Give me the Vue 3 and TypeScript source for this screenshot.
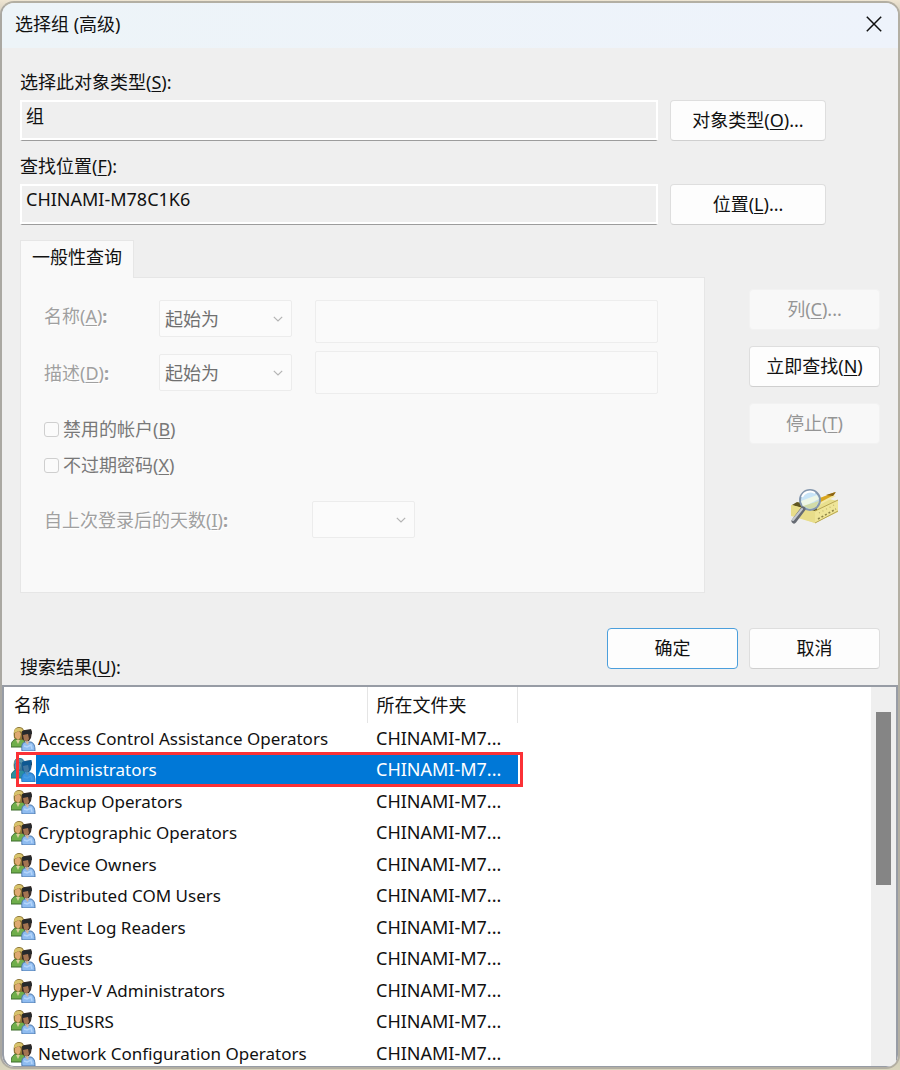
<script setup lang="ts">
import { ref } from 'vue'

const groups: string[] = [
  'Access Control Assistance Operators',
  'Administrators',
  'Backup Operators',
  'Cryptographic Operators',
  'Device Owners',
  'Distributed COM Users',
  'Event Log Readers',
  'Guests',
  'Hyper-V Administrators',
  'IIS_IUSRS',
  'Network Configuration Operators',
]
const folder = 'CHINAMI-M7...'
const selected = ref('Administrators')
const objectType = ref('组')
const place = ref('CHINAMI-M78C1K6')
const filters = [
  { id: 'name', text: '名称', key: 'A' },
  { id: 'desc', text: '描述', key: 'D' },
]
const checks = [
  { text: '禁用的帐户', key: 'B' },
  { text: '不过期密码', key: 'X' },
]
</script>

<template>
  <div class="desktop">
    <main class="dialog">
      <header class="titlebar">
        <h1>选择组 (高级)</h1>
        <button class="close" aria-label="关闭">
          <svg width="16" height="16" viewBox="0 0 16 16"><path d="M.8.8 15.2 15.2M15.2.8.8 15.2" fill="none" stroke="#111" stroke-width="1.5" /></svg>
        </button>
      </header>

      <form class="body" @submit.prevent>
        <section class="scope">
          <label for="type">选择此对象类型(<u>S</u>):</label>
          <input id="type" v-model="objectType" readonly />
          <button type="button" class="btn">对象类型(<u>O</u>)...</button>
          <label for="place">查找位置(<u>F</u>):</label>
          <input id="place" v-model="place" readonly />
          <button type="button" class="btn">位置(<u>L</u>)...</button>
        </section>

        <section class="middle">
          <div class="query">
            <button type="button" class="tab" role="tab" aria-selected="true">一般性查询</button>
            <div class="panel">
              <div v-for="f in filters" :key="f.id" class="filter">
                <label class="dim" :for="f.id">{{ f.text }}(<u>{{ f.key }}</u>)<b>:</b></label>
                <span class="combo">
                  <select disabled :aria-label="f.text"><option>起始为</option></select>
                  <svg width="10" height="6" viewBox="0 0 10 6"><path d="M.8.8 5 5 9.2.8" fill="none" stroke="#b4b4b4" stroke-width="1.2" /></svg>
                </span>
                <input :id="f.id" class="blank" disabled />
              </div>
              <div class="checks">
                <label v-for="c in checks" :key="c.key"><input type="checkbox" disabled /><span>{{ c.text }}(<u>{{ c.key }}</u>)</span></label>
              </div>
              <div class="days">
                <label class="dim" for="days">自上次登录后的天数(<u>I</u>)<b>:</b></label>
                <span class="combo">
                  <select id="days" disabled></select>
                  <svg width="10" height="6" viewBox="0 0 10 6"><path d="M.8.8 5 5 9.2.8" fill="none" stroke="#b4b4b4" stroke-width="1.2" /></svg>
                </span>
              </div>
            </div>
          </div>
          <div class="side">
            <button type="button" class="btn" disabled>列(<u>C</u>)...</button>
            <button type="button" class="btn">立即查找(<u>N</u>)</button>
            <button type="button" class="btn" disabled>停止(<u>T</u>)</button>
            <svg class="finder" width="50" height="40" viewBox="0 0 50 40">
              <path d="M2 18 25 9 48 14 48 25 25 36 1 29Z" fill="#e9df8d" />
              <path d="M2 18 7 15 27 20 27 25Z" fill="#5f5521" />
              <path d="M13 16 39 8 46 9 26 20Z" fill="#f3e9a8" />
              <path d="M25 13 45 5 44 8 25 18Z" fill="#d9a520" />
              <path d="M36 8 46 5 43 9Z" fill="#8a6412" />
              <path d="M1 18 25 24 25 36 1 28Z" fill="#e8dd8a" />
              <path d="M25 24 48 13 48 24 25 36Z" fill="#efe597" />
              <path d="M25 24 48 13M25 36 48 24" stroke="#b7a552" fill="none" />
              <path d="M28 32 46 22" stroke="#8d8448" stroke-width="1.6" stroke-dasharray="2 2" />
              <path d="M29 26 46 17" stroke="#c3b66e" stroke-width="1.2" stroke-dasharray="1 3" />
              <circle cx="20" cy="13" r="10" fill="#c5e3f7" fill-opacity=".93" stroke="#8396ad" stroke-width="2" />
              <path d="M11 14 27 8 29 12 13 20Z" fill="#f5f9e4" fill-opacity=".85" />
              <path d="M13 19 29 14 26 20 20 22Z" fill="#d5d996" fill-opacity=".8" />
              <path d="M12 10C14 5 20 3 25 6" fill="none" stroke="#fff" stroke-width="2" />
              <path d="M13 22 4 34" stroke="#666b73" stroke-width="5" stroke-linecap="round" />
              <path d="M12 22 3 33" stroke="#c5c9cf" stroke-width="2" stroke-linecap="round" />
            </svg>
          </div>
        </section>

        <section class="actions">
          <span id="results">搜索结果(<u>U</u>):</span>
          <button type="submit" class="btn primary">确定</button>
          <button type="button" class="btn">取消</button>
        </section>
      </form>

      <section class="results">
        <div class="listing">
          <table id="groups" aria-labelledby="results">
            <thead>
              <tr><th class="name">名称</th><th class="folder">所在文件夹</th></tr>
            </thead>
            <tbody>
              <tr v-for="g in groups" :key="g" :class="{ selected: g === selected }" @click="selected = g">
                <td class="name">
                  <div class="entry">
                    <svg class="people" width="25" height="24" viewBox="0 0 25 24">
                      <path d="M0 20C0 15 2 13 5 12L12 12 16 18 13 20Z" fill="#6fae4b" stroke="#3c6d2c" />
                      <path d="M3 11C2 5 3 0 8 0S14 4 13 12L10 13 4 12Z" fill="#8b7431" />
                      <path d="M3 6C3 2 5 1 8 1S12 2 12 5L8 4Z" fill="#d8c36c" />
                      <path d="M4 6 8 4 10 7 9 11 7 13 4 10Z" fill="#dfa972" />
                      <path d="M5 13 9 13 7 17Z" fill="#d9cf9c" />
                      <path d="M11 24C10 17 12 15 15 15L20 15C23 16 24 19 24 24Z" fill="#8fbcf0" stroke="#4c78ad" />
                      <path d="M11 9C10 5 12 3 14 3L20 2 21 5 20 11 18 14 14 14 11 12Z" fill="#3b2e28" />
                      <path d="M11 4 20 3 21 7 12 8Z" fill="#25292c" />
                      <path d="M12 8 17 7 18 12 16 15 13 13Z" fill="#a47451" />
                      <path d="M14 15 18 14 17 18Z" fill="#d4b59d" />
                      <path d="M13 19 16 20 20 18 21 22" fill="none" stroke="#b4d5fa" stroke-width="1.5" />
                      <path v-if="g === selected" d="M0 20C0 15 2 13 4 12 2 5 3 0 8 0S12 2 14 3L21 2 20 12 18 14C23 15 25 18 24 24L11 24 10 20Z" fill="#0078d7" fill-opacity=".6" />
                    </svg>
                    <span class="caption">{{ g }}</span>
                  </div>
                </td>
                <td class="folder">{{ folder }}</td>
              </tr>
            </tbody>
          </table>
        </div>
        <div class="scrollbar" role="scrollbar" aria-controls="groups" aria-valuenow="0" aria-orientation="vertical"><div class="thumb"></div></div>
      </section>
    </main>
  </div>
</template>

<style>
html, body { margin: 0; }
</style>

<style scoped>
* { box-sizing: border-box; }
.desktop {
  height: 100vh;
  padding: 1px 0;
  background: linear-gradient(#eee5d2 0, #c3bdb0 24px, #bcb6aa 170px, #a9a9a9 180px, #a5a5a5 980px, #d9d5bd 100%);
  font: 18px/24px "Noto Sans", "Noto Sans CJK SC", sans-serif;
  color: #111;
}
.dialog {
  height: 100%;
  display: flex;
  flex-direction: column;
  overflow: hidden;
  background: #efefef;
  border: 2px solid #b3afa3;
  border-left-color: #aaa8a2;
  border-radius: 14px;
}
button, input, select { font: inherit; color: inherit; margin: 0; }
u { text-underline-offset: 2px; text-decoration-thickness: 1px; }
.titlebar {
  flex: none;
  height: 45px;
  padding: 0 16px 3px 13px;
  display: flex;
  align-items: center;
  justify-content: space-between;
  background: linear-gradient(90deg, #edf4f8, #eef3fb);
}
h1 { margin: 0; font-size: 18px; font-weight: 400; }
.close { display: flex; padding: 0; border: 0; background: none; }
.body { flex: none; padding: 22px 18px 0 18px; }
.scope {
  display: grid;
  grid-template-columns: minmax(0, 1fr) 156px;
  column-gap: 12px;
  padding-right: 54px;
}
.scope label { grid-column: 1 / 3; height: 30px; }
.scope input {
  height: 41px;
  padding: 0 4px 12px;
  border: 2px solid #fff;
  border-bottom: 1px solid #9c9c9c;
  box-shadow: inset 0 -2px #fff;
  background: #efefef;
  border-radius: 0;
  outline: none;
  margin-bottom: 13px;
}
.btn {
  height: 41px;
  padding: 0 0 2px;
  border: 1px solid #dedede;
  border-bottom-color: #cfcfcf;
  border-radius: 4px;
  background: #fdfdfd;
}
.btn:disabled { color: #959595; background: #f8f8f8; border-color: #f2f2f2; }
.btn.primary { border-color: #4c9fdc; }
.middle { display: flex; justify-content: space-between; margin-top: 2px; }
.query { flex: 1; margin-right: 44px; }
.tab {
  display: block;
  position: relative;
  height: 38px;
  margin-bottom: -1px;
  padding: 0 11px 5px;
  border: 1px solid #e6e6e6;
  border-bottom: 0;
  background: #f9f9f9;
}
.panel {
  height: 316px;
  padding: 22px 46px 0 23px;
  border: 1px solid #e6e6e6;
  background: #f9f9f9;
}
.filter {
  display: grid;
  grid-template-columns: 115px 133px minmax(0, 1fr);
  align-items: start;
  margin-bottom: 8px;
}
.filter .dim { padding-top: 4px; }
.filter + .filter { align-items: center; margin-bottom: 23px; }
.filter + .filter .dim { padding-top: 0; }
.dim { color: #a0a0a0; text-shadow: 1px 1px #fff; }
.combo { display: grid; align-items: center; }
.combo > * { grid-area: 1 / 1; }
.combo svg { justify-self: end; margin-right: 9px; }
select {
  width: 100%;
  height: 37px;
  padding: 0 5px;
  appearance: none;
  border: 1px solid #ececec;
  border-radius: 2px;
  background: #fbfbfb;
}
select:disabled { color: #707070; opacity: 1; }
.blank {
  height: 43px;
  min-width: 0;
  margin-left: 23px;
  border: 1px solid #ededed;
  border-radius: 2px;
  background: #fafafa;
}
.checks { display: flex; flex-direction: column; gap: 12px; color: #787878; }
.checks label { display: flex; align-items: center; gap: 4px; }
.checks input {
  width: 15px;
  height: 15px;
  appearance: none;
  border: 1px solid #cfcfcf;
  border-radius: 3px;
  background: #fbfbfb;
}
.days { display: flex; align-items: center; justify-content: space-between; width: 371px; margin-top: 24px; }
.days .combo { width: 103px; }
.side { width: 131px; display: flex; flex-direction: column; gap: 16px; padding-top: 49px; }
.finder { align-self: center; margin: 27px 0 0; }
.actions { display: flex; gap: 11px; padding-top: 35px; height: 92px; }
.actions span { flex: 1; padding-top: 27px; }
.actions .btn { width: 131px; }
.results {
  flex: 1;
  min-height: 0;
  display: flex;
  border: 2px solid #979ca5;
  border-bottom-width: 1px;
  background: #fff;
  border-radius: 0 0 12px 12px;
}
.listing { flex: 1; overflow: hidden; }
table { width: 514px; table-layout: fixed; border-collapse: collapse; }
th, td { padding: 0; text-align: left; font-weight: 400; white-space: nowrap; }
th { height: 36px; border-right: 1px solid #e5e5e5; }
th.name { width: 363px; padding-left: 10px; }
th.folder, td.folder { padding-left: 9px; }
td { vertical-align: top; }
td.folder { line-height: 30px; }
tbody tr { height: 31px; }
tbody tr:nth-child(even) { height: 32px; }
.entry { display: flex; align-items: center; height: 31px; padding-left: 7px; }
.people { flex: none; }
.caption { flex: 1; padding-left: 2px; font-size: 17px; line-height: 31px; }
.selected { color: #fff; }
.selected .caption, .selected .folder { background: #0078d7; }
.selected .name { position: relative; }
.selected .name::after {
  content: "";
  position: absolute;
  inset: -2px -156px -1px 12px;
  border: 3px solid #fb3136;
}
.scrollbar { width: 25px; background: #efefef; padding: 25px 5px 0 5px; }
.thumb { height: 173px; background: #858585; }
</style>
